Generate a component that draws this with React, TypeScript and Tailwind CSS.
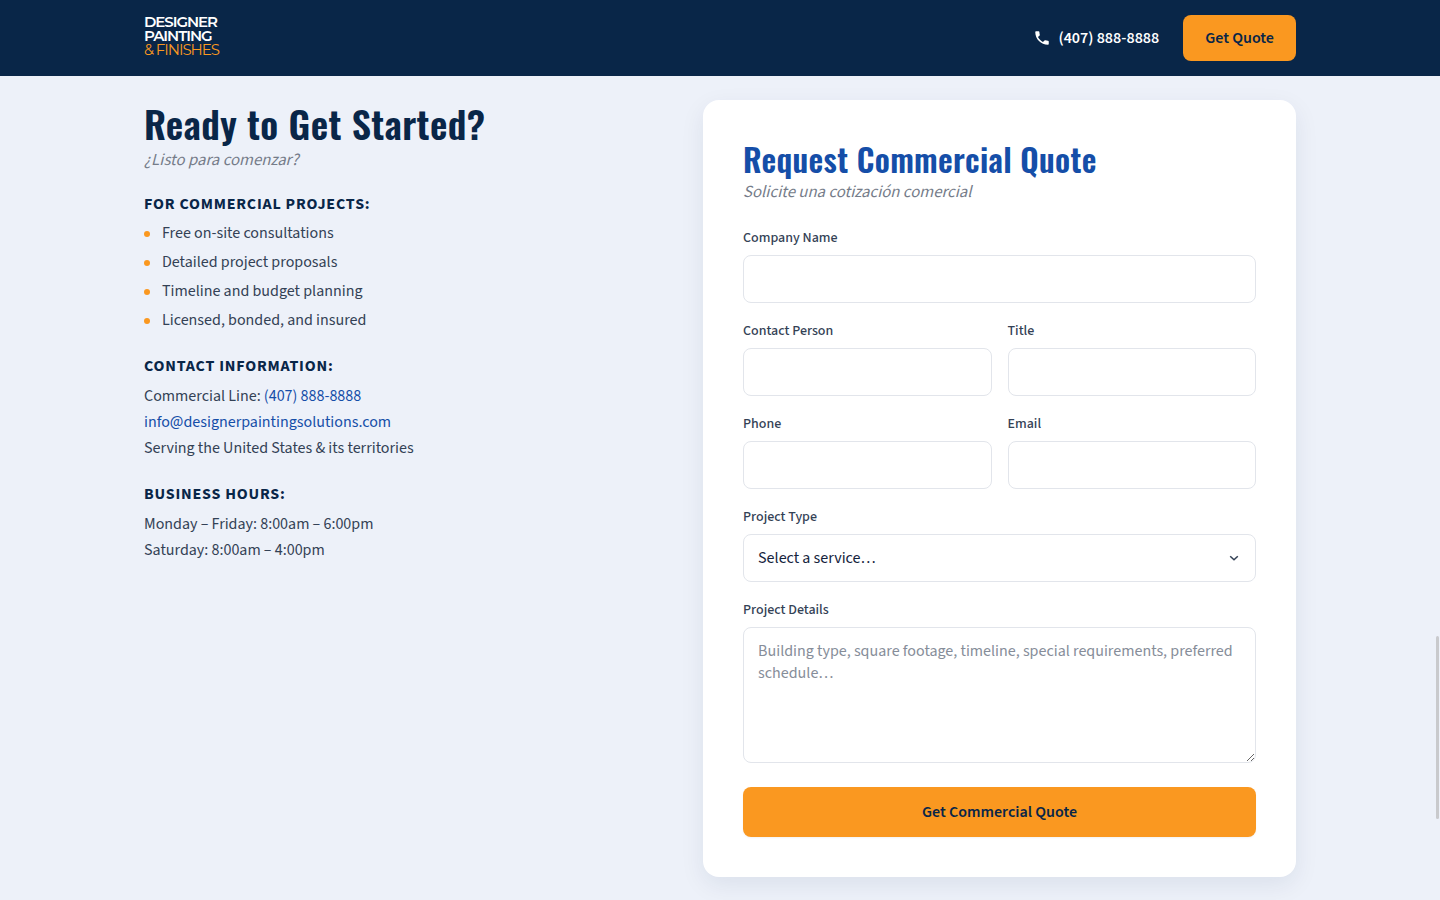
import { useState } from "react";
import type { ReactNode } from "react";

const PHONE = "(407) 888-8888";

const perks = [
  "Free on-site consultations",
  "Detailed project proposals",
  "Timeline and budget planning",
  "Licensed, bonded, and insured",
];

const services = [
  "Interior Painting",
  "Exterior Painting",
  "Cabinet Refinishing",
  "Epoxy Floors",
];

const inputStyles =
  "block w-full rounded-lg border border-[#e2e5eb] bg-white px-3.5 text-[#14233c] focus:outline-none focus:ring-2 focus:ring-[#154ea8]/30";

const headingStyles = "font-['Oswald',sans-serif] font-semibold tracking-[0.01em]";

const subtitleStyles =
  "font-['Noto_Sans_CJK_SC',sans-serif] text-[15px] leading-[25px] text-[#757c89] italic";

type FieldProps = {
  id: string;
  label: string;
  children: ReactNode;
};

function Field({ id, label, children }: FieldProps) {
  return (
    <div>
      <label
        htmlFor={id}
        className="mb-[5px] block text-sm leading-6 font-medium text-[#334155]"
      >
        {label}
      </label>
      {children}
    </div>
  );
}

function TextField({ id, label, type = "text" }: { id: string; label: string; type?: string }) {
  return (
    <Field id={id} label={label}>
      <input id={id} name={id} type={type} className={`${inputStyles} h-12`} />
    </Field>
  );
}

function InfoBlock({ title, children }: { title: string; children: ReactNode }) {
  return (
    <section className="mt-5">
      <h3 className="mb-1 leading-[26px] font-bold tracking-wider text-[#092648] uppercase">
        {title}
      </h3>
      {children}
    </section>
  );
}

function Header() {
  return (
    <header className="bg-[#092648]">
      <div className="mx-auto flex h-19 max-w-6xl items-center justify-between px-6 xl:px-0">
        <a
          href="#"
          className="mb-1 flex flex-col font-['Montserrat','Inter',sans-serif] text-[15px] leading-[14px] tracking-[-0.07em] text-white"
        >
          <span className="font-semibold">DESIGNER</span>
          <span className="font-semibold">PAINTING</span>
          <span className="text-[#fa9820]">&amp; FINISHES</span>
        </a>
        <div className="flex items-center gap-6">
          <a href="tel:4078888888" className="flex items-center gap-[7px] font-semibold text-white">
            <svg viewBox="0 0 24 24" className="size-[18px]" fill="currentColor" aria-hidden="true">
              <path d="M6.62 10.79c1.44 2.83 3.76 5.14 6.59 6.59l2.2-2.2c.27-.27.67-.36 1.02-.24 1.12.37 2.33.57 3.57.57.55 0 1 .45 1 1V20c0 .55-.45 1-1 1-9.39 0-17-7.61-17-17 0-.55.45-1 1-1h3.5c.55 0 1 .45 1 1 0 1.25.2 2.45.57 3.57.11.35.03.74-.25 1.02l-2.2 2.2z" />
            </svg>
            {PHONE}
          </a>
          <button
            type="button"
            className="h-[46px] cursor-pointer rounded-lg bg-[#fa9820] px-[22px] font-semibold text-[#092648]"
          >
            Get Quote
          </button>
        </div>
      </div>
    </header>
  );
}

function QuoteForm() {
  const [service, setService] = useState("");

  return (
    <form
      onSubmit={(e) => e.preventDefault()}
      className="rounded-2xl bg-white p-10 shadow-[0_8px_24px_rgba(9,38,72,0.08)]"
    >
      <h2 className={`${headingStyles} text-[32px] leading-[38px] text-[#154ea8]`}>
        Request Commercial Quote
      </h2>
      <p className={`${subtitleStyles} mb-[23px]`}>Solicite una cotización comercial</p>
      <div className="flex flex-col gap-4">
        <TextField id="company" label="Company Name" />
        <div className="grid grid-cols-2 gap-4">
          <TextField id="contact" label="Contact Person" />
          <TextField id="title" label="Title" />
          <TextField id="phone" label="Phone" type="tel" />
          <TextField id="email" label="Email" type="email" />
        </div>
        <Field id="service" label="Project Type">
          <div className="relative">
            <select
              id="service"
              value={service}
              onChange={(e) => setService(e.target.value)}
              className={`${inputStyles} h-12 appearance-none`}
            >
              <option value="">Select a service…</option>
              {services.map((name) => (
                <option key={name} value={name}>
                  {name}
                </option>
              ))}
            </select>
            <svg
              viewBox="0 0 12 12"
              className="pointer-events-none absolute top-1/2 right-4 size-3 -translate-y-1/2 text-[#334155]"
              fill="none"
              stroke="currentColor"
              strokeWidth="1.5"
              aria-hidden="true"
            >
              <path d="M2.2 4.2 6 7.8l3.8-3.6" />
            </svg>
          </div>
        </Field>
        <Field id="details" label="Project Details">
          <textarea
            id="details"
            placeholder="Building type, square footage, timeline, special requirements, preferred schedule…"
            className={`${inputStyles} h-34 resize-y py-3 leading-[22px] placeholder:text-[#868d99]`}
          />
        </Field>
      </div>
      <button
        type="submit"
        className="mt-6 h-[50px] w-full cursor-pointer rounded-lg bg-[#fa9820] font-semibold text-[#092648] shadow-xs"
      >
        Get Commercial Quote
      </button>
    </form>
  );
}

export default function App() {
  return (
    <div className="min-h-screen bg-[#edf1f9] font-['Source_Sans_3','Noto_Sans_CJK_SC',sans-serif] text-[#334155]">
      <Header />
      <main className="mx-auto grid max-w-6xl gap-[65px] px-6 pt-6 md:grid-cols-[5fr_6fr] xl:px-0">
        <div>
          <h2 className={`${headingStyles} text-[38px] leading-[46px] text-[#092648]`}>
            Ready to Get Started?
          </h2>
          <p className={subtitleStyles}>¿Listo para comenzar?</p>
          <InfoBlock title="For Commercial Projects:">
            <ul className="flex flex-col gap-1">
              {perks.map((perk) => (
                <li key={perk} className="flex items-center gap-3 leading-[25px]">
                  <span className="size-1.5 rounded-full bg-[#fa9820]" />
                  {perk}
                </li>
              ))}
            </ul>
          </InfoBlock>
          <InfoBlock title="Contact Information:">
            <div className="leading-[26px]">
              <p>
                Commercial Line:{" "}
                <a href="tel:4078888888" className="text-[#154ea8]">
                  {PHONE}
                </a>
              </p>
              <p>
                <a href="mailto:info@designerpaintingsolutions.com" className="text-[#154ea8]">
                  info@designerpaintingsolutions.com
                </a>
              </p>
              <p>Serving the United States &amp; its territories</p>
            </div>
          </InfoBlock>
          <InfoBlock title="Business Hours:">
            <div className="leading-[26px]">
              <p>Monday – Friday: 8:00am – 6:00pm</p>
              <p>Saturday: 8:00am – 4:00pm</p>
            </div>
          </InfoBlock>
        </div>
        <QuoteForm />
      </main>
      {/* scroll thumb */}
      <div className="fixed right-px bottom-[81px] h-[183px] w-[3px] rounded-full bg-[#c9cacd]" />
    </div>
  );
}
